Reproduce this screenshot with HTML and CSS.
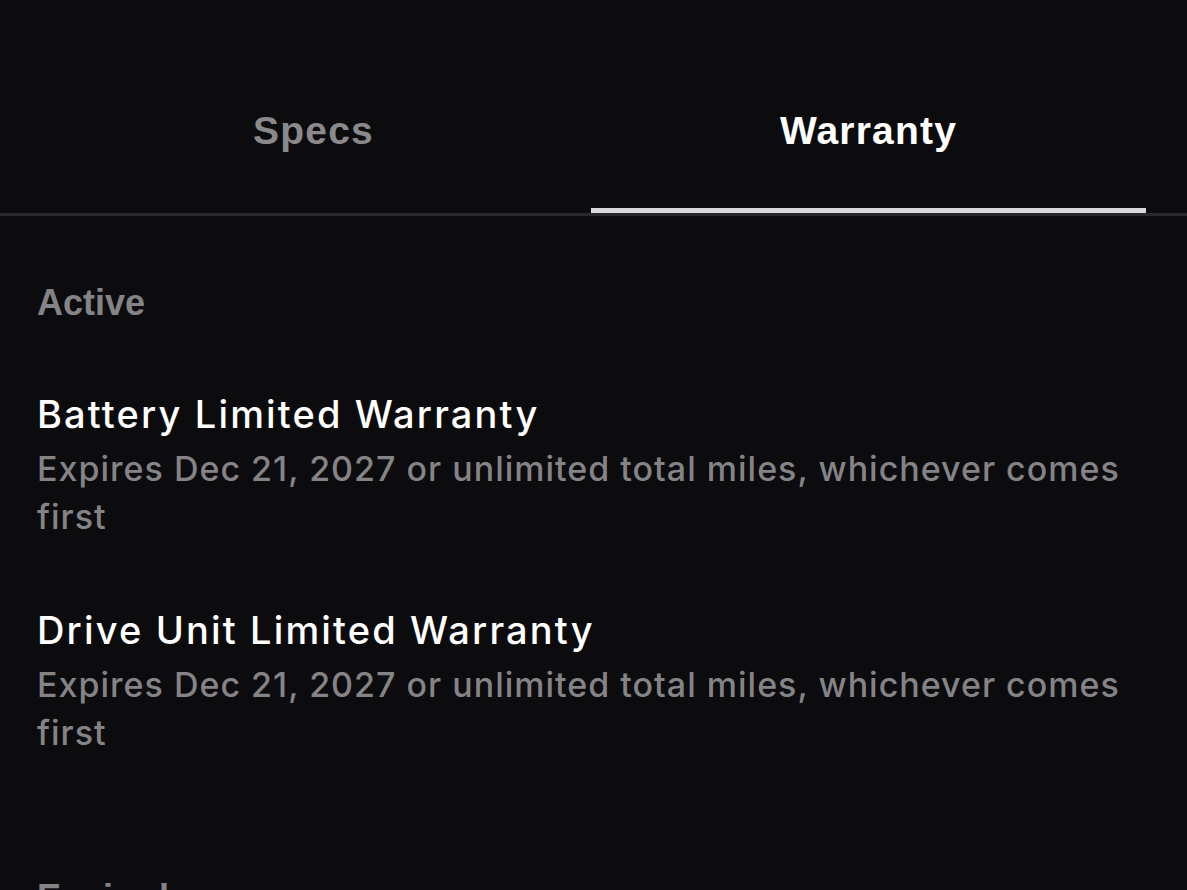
FILE: index.html
```html
<!DOCTYPE html>
<html lang="en">
  <head>
    <meta charset="UTF-8" />
    <meta name="viewport" content="width=device-width, initial-scale=1.0" />
    <title>Warranty</title>
    <link rel="stylesheet" href="styles.css">
  </head>
  <body>
    <div class="tabs">
      <div class="tab">Specs</div>
      <div class="tab active">Warranty</div>
    </div>

    <div class="content">
      <div class="section-title">Active</div>

      <div class="item">
        <div class="item-name">Battery Limited Warranty</div>
        <div class="item-desc">Expires Dec 21, 2027 or unlimited total miles, whichever comes first</div>
      </div>

      <div class="item">
        <div class="item-name">Drive Unit Limited Warranty</div>
        <div class="item-desc">Expires Dec 21, 2027 or unlimited total miles, whichever comes first</div>
      </div>

      <div class="section-title expired">Expired</div>
    </div>
  </body>
</html>
```

FILE: styles.css
```css
* {
  margin: 0;
  padding: 0;
  box-sizing: border-box;
}
html,
body {
  height: 100%;
  overflow: hidden;
}
body {
  background: #0c0c0e;
  font-family: Inter, "Noto Sans", sans-serif;
  font-weight: 500;
  color: #ffffff;
}
.tabs {
  display: flex;
  padding: 0 41px 0 36px;
  border-bottom: 3px solid #29292b;
}
.tab {
  flex: 1;
  height: 213px;
  padding-top: 109px;
  text-align: center;
  font-family: "Liberation Sans", Arial, sans-serif;
  font-weight: 700;
  font-size: 39px;
  line-height: 44px;
  letter-spacing: 1.2px;
  color: #8a8a8c;
  border-bottom: 5px solid transparent;
}
.tab.active {
  color: #ffffff;
  border-bottom-color: #d9d9db;
}
.content {
  padding: 0 30px 0 37px;
}
.section-title {
  margin-top: 67px;
  font-family: "Liberation Sans", Arial, sans-serif;
  font-weight: 700;
  font-size: 36px;
  line-height: 40px;
  color: #848486;
}
.item {
  margin-top: 63px;
}
.item + .item {
  margin-top: 61px;
}
.item-name {
  font-size: 38px;
  line-height: 57px;
  letter-spacing: 2.15px;
}
.item-desc {
  margin-top: 2px;
  font-size: 34px;
  line-height: 48px;
  letter-spacing: 1px;
  color: #848486;
}
.section-title.expired {
  margin-top: 121px;
}
```
